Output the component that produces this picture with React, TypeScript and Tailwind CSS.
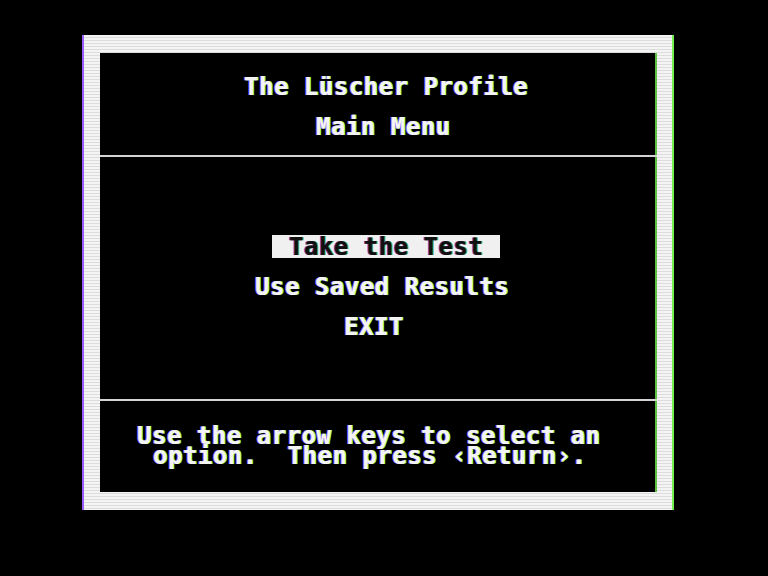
const fringe =
  "[text-shadow:-1px_0_#a868ff,1px_0_#78ff58] text-[#f4f4f4]";

function Row({ pl, text }: { pl: string; text: string }) {
  return (
    <div className={`h-[20px] leading-[20px] whitespace-pre ${pl} ${fringe}`}>
      {text}
    </div>
  );
}

export default function App() {
  return (
    <div className="w-[768px] h-[576px] bg-black pt-[35px] pl-[84px] overflow-hidden font-['DejaVu_Sans_Mono',monospace] font-bold text-[24px] tracking-[0.5px]">
      {/* outer white frame */}
      <div className="w-[588px] h-[475px] pt-[18px] pl-[16px] pr-[15px] pb-[18px] bg-[repeating-linear-gradient(to_bottom,#f4f4f4_0px,#f4f4f4_2px,#dcdcdc_2px,#dcdcdc_3px)] shadow-[-2px_0_0_#9a5cff,2px_0_0_#72f050]">
        <div className="h-full bg-black flex flex-col shadow-[inset_-2px_0_0_#5cc040]">
          {/* header */}
          <div className="h-[102px] pt-[24px]">
            <Row pl="pl-[144px]" text="The Lüscher Profile" />
            <div className="h-[20px]" />
            <Row pl="pl-[216px]" text="Main Menu" />
          </div>
          <div className="h-[2px] bg-[#d4d4d4]" />

          {/* menu */}
          <div className="h-[242px] pt-[78px]">
            <div className="flex pl-[172px]">
              <div className="h-[23px] pt-[2px] pl-[17px] pr-[17px] bg-[#f0f0f0] whitespace-pre">
                <div className="h-[20px] leading-[20px] text-[#101010] [text-shadow:-1px_0_#7a48c8,1px_0_#4a9a30]">
                  Take the Test
                </div>
              </div>
            </div>
            <div className="h-[19px]" />
            <Row pl="pl-[155px]" text="Use Saved Results" />
            <div className="h-[20px]" />
            <Row pl="pl-[244px]" text="EXIT" />
          </div>
          <div className="h-[2px] bg-[#d4d4d4]" />

          {/* footer */}
          <div className="flex-1 pt-[25px]">
            <Row pl="pl-[37px]" text="Use the arrow keys to select an" />
            <Row pl="pl-[53px]" text="option.  Then press ‹Return›." />
          </div>
        </div>
      </div>
    </div>
  );
}
